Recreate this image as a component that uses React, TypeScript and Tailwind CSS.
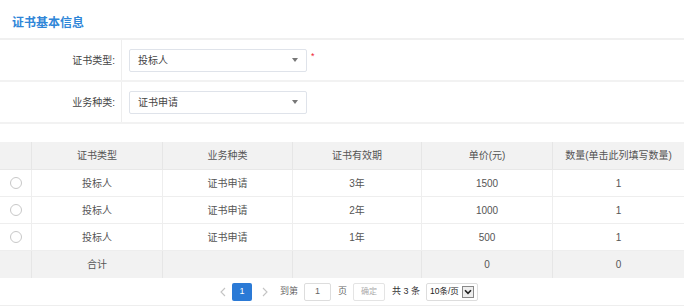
import React from 'react';

const rows = [
  { type: '投标人', biz: '证书申请', term: '3年', price: '1500', qty: '1' },
  { type: '投标人', biz: '证书申请', term: '2年', price: '1000', qty: '1' },
  { type: '投标人', biz: '证书申请', term: '1年', price: '500', qty: '1' },
];

const cols = 'grid grid-cols-[32px_131px_130px_129px_131px_131px]';

function Select({ value }: { value: string }) {
  return (
    <div className="w-[178px] h-[23px] border border-[#dfe3ea] rounded-[2px] flex items-center justify-between pl-[8px] pr-[8px] text-[10px] text-[#444]">
      <span>{value}</span>
      <span className="w-0 h-0 border-l-[3px] border-r-[3px] border-t-[4px] border-l-transparent border-r-transparent border-t-[#777]" />
    </div>
  );
}

export default function App() {
  return (
    <div
      className="w-[684px] h-[307px] overflow-hidden bg-white"
      style={{ fontFamily: '"Liberation Sans", "Noto Sans CJK SC", sans-serif' }}
    >
      <div className="h-[38px] flex items-center pl-[12px] pt-[8px]">
        <h2 className="text-[12px] font-bold text-[#2f86d8]">证书基本信息</h2>
      </div>

      <div className="border-t-2 border-[#f0f0f0]">
        <div className="flex h-[42px] border-b-2 border-[#f2f2f2]">
          <div className="w-[122px] border-r border-[#eeeeee] flex items-center justify-end pr-[6px] text-[10px] text-[#444]">
            证书类型:
          </div>
          <div className="flex items-center pl-[7px] gap-[4px]">
            <Select value="投标人" />
            <span className="text-[#e23] text-[9px] -mt-[6px]">*</span>
          </div>
        </div>
        <div className="flex h-[42px] border-b-2 border-[#f2f2f2]">
          <div className="w-[122px] border-r border-[#eeeeee] flex items-center justify-end pr-[6px] text-[10px] text-[#444]">
            业务种类:
          </div>
          <div className="flex items-center pl-[7px]">
            <Select value="证书申请" />
          </div>
        </div>
      </div>

      <div className="mt-[18px] text-[10px] text-[#555]">
        <div className={`${cols} h-[28px] bg-[#f2f2f2] border-b border-[#e8e8e8]`}>
          <div className="border-r border-[#e6e6e6]" />
          {['证书类型', '业务种类', '证书有效期', '单价(元)', '数量(单击此列填写数量)'].map((h, i) => (
            <div
              key={h}
              className={`flex items-center justify-center ${i < 4 ? 'border-r border-[#e6e6e6]' : ''}`}
            >
              {h}
            </div>
          ))}
        </div>
        {rows.map((r, i) => (
          <div key={i} className={`${cols} h-[27px] border-b border-[#eeeeee]`}>
            <div className="flex items-center justify-center border-r border-[#eeeeee]">
              <span className="w-[12px] h-[12px] rounded-full border border-[#c8c8c8] bg-white" />
            </div>
            <div className="flex items-center justify-center border-r border-[#eeeeee]">{r.type}</div>
            <div className="flex items-center justify-center border-r border-[#eeeeee]">{r.biz}</div>
            <div className="flex items-center justify-center border-r border-[#eeeeee]">{r.term}</div>
            <div className="flex items-center justify-center border-r border-[#eeeeee]">{r.price}</div>
            <div className="flex items-center justify-center">{r.qty}</div>
          </div>
        ))}
        <div className={`${cols} h-[27px] bg-[#f2f2f2]`}>
          <div className="border-r border-[#e6e6e6]" />
          <div className="flex items-center justify-center border-r border-[#e6e6e6]">合计</div>
          <div className="border-r border-[#e6e6e6]" />
          <div className="border-r border-[#e6e6e6]" />
          <div className="flex items-center justify-center border-r border-[#e6e6e6]">0</div>
          <div className="flex items-center justify-center">0</div>
        </div>

        <div className="h-[28px] border-b border-[#eeeeee] flex items-center pl-[213px] text-[9px] text-[#666]">
          <span className="w-[19px] flex justify-center">
            <svg width="6" height="10" viewBox="0 0 6 10">
              <path d="M5 1 L1 5 L5 9" fill="none" stroke="#c4c4c4" strokeWidth="1.1" />
            </svg>
          </span>
          <span className="w-[20px] h-[18px] bg-[#2b7ad6] text-white flex items-center justify-center rounded-[2px] text-[9px]">
            1
          </span>
          <span className="w-[26px] flex justify-center">
            <svg width="6" height="10" viewBox="0 0 6 10">
              <path d="M1 1 L5 5 L1 9" fill="none" stroke="#c4c4c4" strokeWidth="1.1" />
            </svg>
          </span>
          <span className="ml-[2px]">到第</span>
          <span className="ml-[6px] w-[27px] h-[18px] border border-[#dddddd] rounded-[2px] flex items-center justify-center">1</span>
          <span className="ml-[7px]">页</span>
          <span className="ml-[6px] w-[32px] h-[18px] border border-[#e4e4e4] rounded-[2px] flex items-center justify-center text-[#aaa] text-[8px]">
            确定
          </span>
          <span className="ml-[7px] text-[#333]">共 3 条</span>
          <span className="ml-[6px] h-[18px] w-[52px] border border-[#dddddd] rounded-[2px] flex items-center pl-[3px] gap-[3px] text-[#222] text-[8.5px]">
            10条/页
            <span className="w-[12px] h-[12px] border border-[#888] bg-[#eee] flex items-center justify-center">
              <svg width="8" height="6" viewBox="0 0 8 6">
                <path d="M1 1.2 L4 4.4 L7 1.2" fill="none" stroke="#222" strokeWidth="1.6" />
              </svg>
            </span>
          </span>
        </div>
      </div>
    </div>
  );
}
